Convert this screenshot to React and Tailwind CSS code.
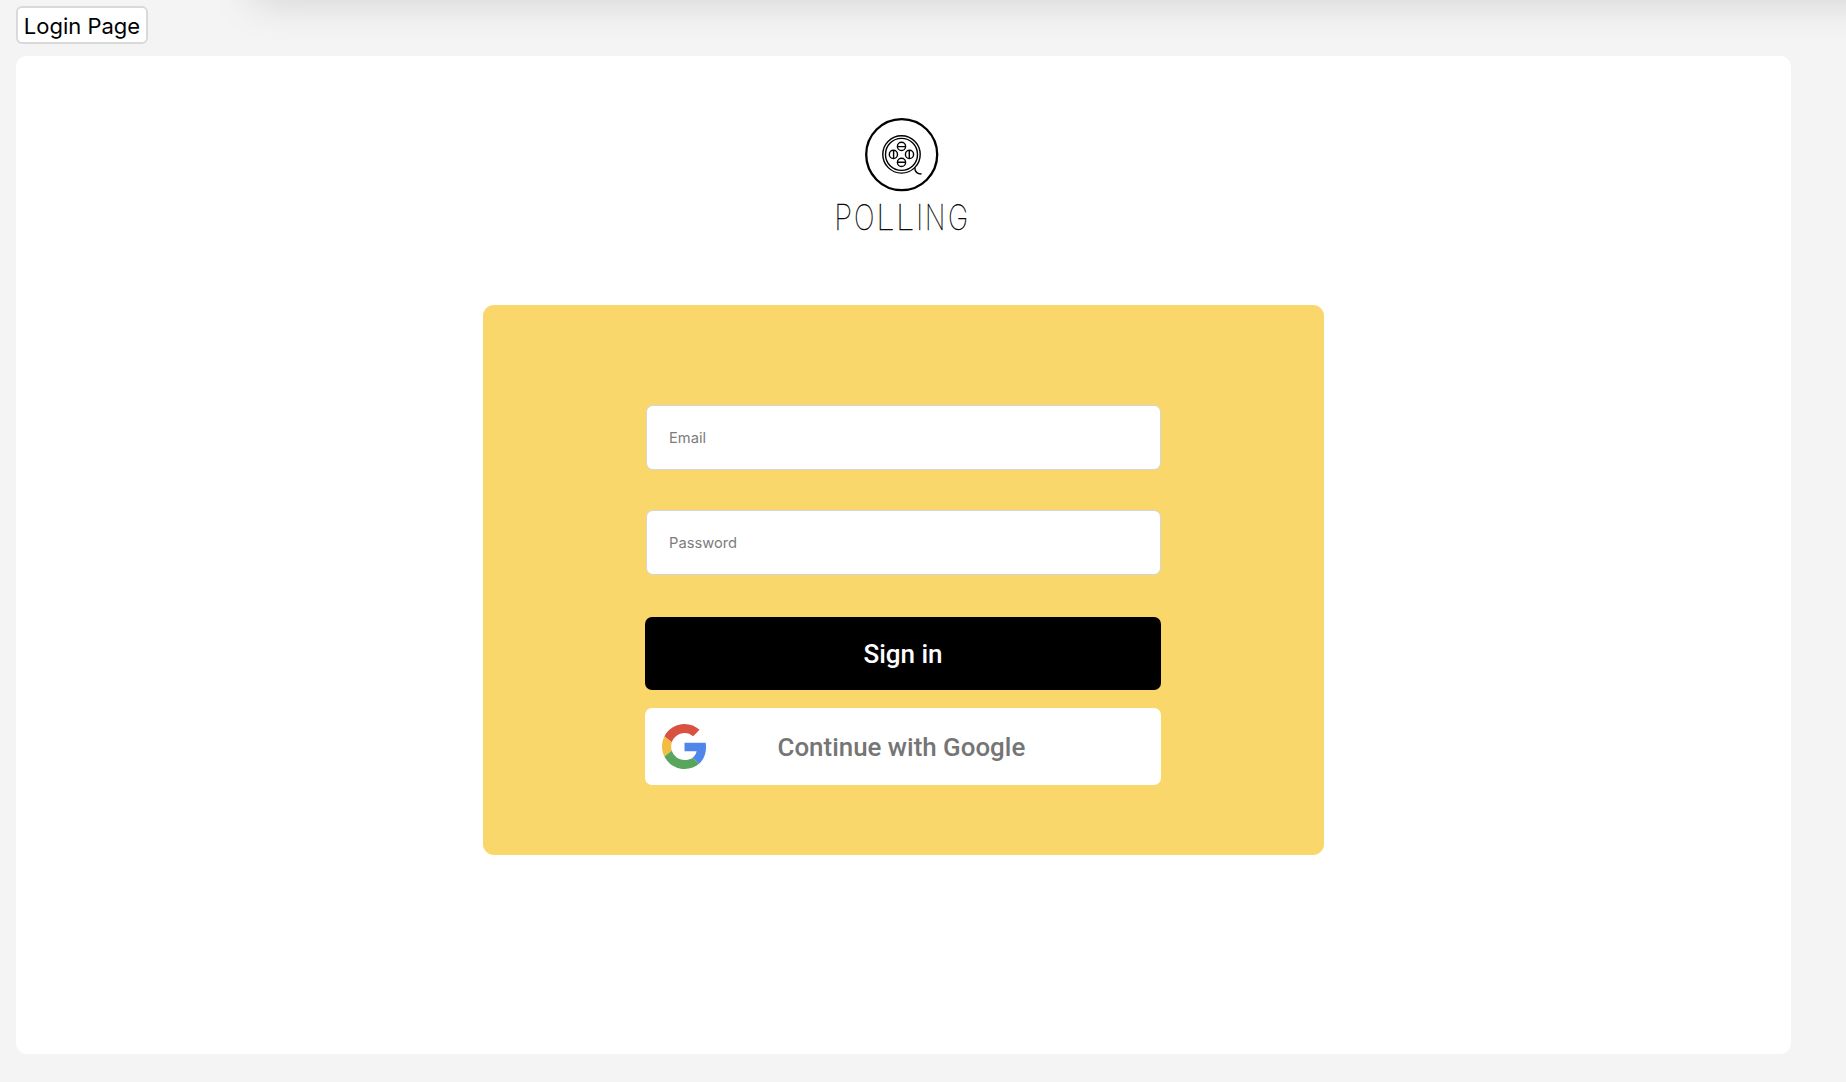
const letters = [
  ["P", "translate(834.3 229.7) scale(.84 1)"],
  ["O", "translate(853.9 229.7) scale(.78 1)"],
  ["L", "translate(876.3 229.7) scale(.93 1)"],
  ["L", "translate(896 229.7) scale(.93 1)"],
  ["I", "translate(916.2 229.7) scale(.78 1)"],
  ["N", "translate(925 229.7) scale(.75 1)"],
  ["G", "translate(948 229.7) scale(.78 1)"],
];

function Logo() {
  return (
    <svg viewBox="830 112 144 134" className="block h-[134px] w-[144px] overflow-visible" fill="none" stroke="#000">
      <circle cx="901.7" cy="154.6" r="35.5" strokeWidth="2.3" />
      <circle cx="901.5" cy="154.4" r="18.7" strokeWidth="1.4" />
      <circle cx="901.5" cy="154.4" r="16" strokeWidth="1.4" />
      <g strokeWidth="1.4">
        <circle cx="901.5" cy="146.4" r="4.1" />
        <circle cx="901.5" cy="162.4" r="4.1" />
        <circle cx="893.4" cy="154.4" r="4.1" />
        <circle cx="909.5" cy="154.4" r="4.1" />
        <path d="M897.4 146.6h8.2M897.4 162.2h8.2M893.6 150.3v8.2M909.3 150.3v8.2" />
        <path d="M914.8 167.5c0 3.7 2.4 6.4 6.7 6.5" />
      </g>
      <g fill="#000" strokeWidth=".35">
        {letters.map(([char, transform], i) => (
          <text
            key={i}
            transform={transform}
            className="font-['Inter',sans-serif] text-[35px] leading-none font-thin"
          >
            {char}
          </text>
        ))}
      </g>
    </svg>
  );
}

function GoogleIcon() {
  return (
    <svg viewBox="0 0 48 48" className="h-[45px] w-[45px]">
      <path fill="#D95140" d="M24 9.5c3.54 0 6.71 1.22 9.21 3.6l6.85-6.85C35.9 2.38 30.47 0 24 0 14.62 0 6.51 5.38 2.56 13.22l7.98 6.19C12.43 13.72 17.74 9.5 24 9.5z" />
      <path fill="#5086EC" d="M46.98 24.55c0-1.57-.15-3.09-.38-4.55H24v9.02h12.94c-.58 2.96-2.26 5.48-4.78 7.18l7.73 6c4.51-4.18 7.09-10.36 7.09-17.65z" />
      <path fill="#F2BD42" d="M10.53 28.59c-.48-1.45-.76-2.99-.76-4.59s.27-3.14.76-4.59l-7.98-6.19C.92 16.46 0 20.12 0 24c0 3.88.92 7.54 2.56 10.78l7.97-6.19z" />
      <path fill="#58A55C" d="M24 48c6.48 0 11.93-2.13 15.89-5.81l-7.73-6c-2.15 1.45-4.92 2.3-8.16 2.3-6.26 0-11.57-4.22-13.47-9.91l-7.98 6.19C6.51 42.62 14.62 48 24 48z" />
    </svg>
  );
}

const inputClass =
  "ml-px block h-[65px] w-[515px] rounded-[7px] border border-[#d5d5d5] bg-white px-[22px] font-['Inter',sans-serif] text-[14.7px] placeholder:text-[#7c7c7c] placeholder:opacity-100";

export default function App() {
  return (
    <div className="relative h-[1082px] w-[1846px] overflow-hidden bg-[#f4f4f4] pl-4 pt-1.5">
      <div className="pointer-events-none absolute -top-[60px] left-[252px] h-[60px] w-[1800px] shadow-[0_0_44px_rgba(0,0,0,0.15)]" />
      <div className="relative flex h-[38px] w-[132px] items-center justify-center rounded-[6px] border-2 border-[#d9d9d9] bg-white pt-0.5 font-['Inter',sans-serif] text-[22px] text-black">
        <span className="whitespace-nowrap">Login Page</span>
      </div>
      <main className="relative mt-3 flex h-[998px] w-[1774.5px] flex-col items-start rounded-[11px] bg-white">
        <div className="ml-[814px] mt-14">
          <Logo />
        </div>
        <form className="ml-[467px] mt-[59px] h-[549.5px] w-[841px] rounded-[11px] bg-[#f9d76b] pl-[162px] pt-[100px]">
          <input type="email" placeholder="Email" className={inputClass} />
          <input type="password" placeholder="Password" className={`${inputClass} mt-10`} />
          <button type="button" className="mt-[42px] flex h-[73px] w-[516px] items-center justify-center rounded-[7px] bg-black pt-px font-['Roboto',sans-serif] text-[26px] font-medium text-white">
            Sign in
          </button>
          <button type="button" className="mt-[17.5px] flex h-[77.5px] w-[516px] items-center rounded-[7px] bg-white pl-[16.5px] font-['Roboto',sans-serif] text-[25.9px] font-medium text-[#757575]">
            <GoogleIcon />
            <span className="ml-[71px] whitespace-nowrap pt-[3px]">Continue with Google</span>
          </button>
        </form>
      </main>
    </div>
  );
}
